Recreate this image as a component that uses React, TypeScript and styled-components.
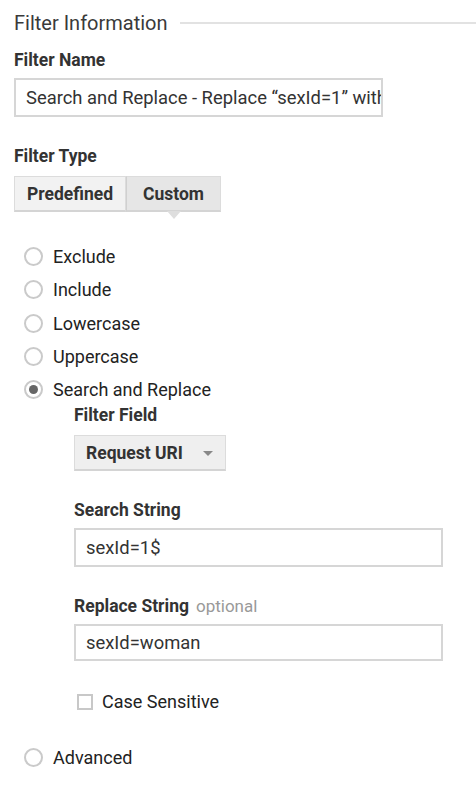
import React from "react";
import styled, { createGlobalStyle } from "styled-components";

const Global = createGlobalStyle`
  html, body { margin: 0; padding: 0; background: #fff; }
  body { font-family: Roboto, "Liberation Sans", Arial, sans-serif; color: #333; }
`;

const Page = styled.div`
  width: 476px;
  padding: 10px 0 20px 14px;
  box-sizing: border-box;
`;

const SectionHeader = styled.div`
  display: flex;
  align-items: center;
  height: 26px;
`;

const SectionTitle = styled.div`
  font-size: 20px;
  color: #3a3a3a;
  white-space: nowrap;
`;

const HeaderRule = styled.div`
  flex: 1;
  margin-left: 12px;
  height: 2px;
  background: #e2e2e2;
`;

const Label = styled.div<{ $mt: number }>`
  margin-top: ${(p) => p.$mt}px;
  font-size: 17.5px;
  font-weight: 700;
  color: #333;
  line-height: 20px;
`;

const Optional = styled.span`
  font-weight: 400;
  color: #999;
  margin-left: 7px;
  font-size: 17px;
`;

const TextBox = styled.div<{ $w: number; $h: number; $mt: number }>`
  margin-top: ${(p) => p.$mt}px;
  width: ${(p) => p.$w}px;
  height: ${(p) => p.$h}px;
  box-sizing: border-box;
  border: 2px solid #d6d6d6;
  padding: 0 10px;
  display: flex;
  align-items: center;
  font-size: 18.4px;
  color: #333;
  overflow: hidden;
  white-space: nowrap;
`;

const ButtonGroup = styled.div`
  display: flex;
  margin-top: 10px;
  height: 36px;
`;

const ToggleButton = styled.div<{ $active?: boolean; $w: number }>`
  position: relative;
  width: ${(p) => p.$w}px;
  box-sizing: border-box;
  display: flex;
  align-items: center;
  justify-content: center;
  font-size: 17.5px;
  font-weight: 700;
  color: #333;
  background: ${(p) => (p.$active ? "#e6e6e6" : "#f2f2f2")};
  border: 1px solid #dcdcdc;
  border-bottom: 2px solid #d4d4d4;
  & + & { border-left: 1px solid #d0d0d0; }
`;

const Pointer = styled.div`
  position: absolute;
  left: 50%;
  bottom: -9px;
  margin-left: -7px;
  width: 0;
  height: 0;
  border-left: 7px solid transparent;
  border-right: 7px solid transparent;
  border-top: 8px solid #dedede;
`;

const RadioList = styled.div`
  margin-top: 28px;
  display: flex;
  flex-direction: column;
`;

const RadioRow = styled.div<{ $mt?: number }>`
  display: flex;
  align-items: center;
  height: 33.3px;
  padding-left: 10px;
  margin-top: ${(p) => p.$mt || 0}px;
`;

const RadioCircle = styled.div<{ $checked?: boolean }>`
  width: 19px;
  height: 19px;
  box-sizing: border-box;
  border: 2px solid #cacaca;
  border-radius: 50%;
  display: flex;
  align-items: center;
  justify-content: center;
  &::after {
    content: "";
    display: ${(p) => (p.$checked ? "block" : "none")};
    width: 9px;
    height: 9px;
    border-radius: 50%;
    background: #666;
  }
`;

const RadioLabel = styled.span`
  margin-left: 10px;
  font-size: 18px;
  color: #222;
`;

const SubForm = styled.div`
  padding-left: 60px;
  display: flex;
  flex-direction: column;
`;

const SelectBox = styled.div`
  margin-top: 10px;
  width: 152px;
  height: 36px;
  box-sizing: border-box;
  background: #efefef;
  border: 1px solid #dcdcdc;
  border-bottom: 2px solid #d4d4d4;
  display: flex;
  align-items: center;
  justify-content: space-between;
  padding: 0 12px 0 11px;
  font-size: 17.5px;
  font-weight: 700;
  color: #333;
`;

const Caret = styled.div`
  width: 0;
  height: 0;
  border-left: 5px solid transparent;
  border-right: 5px solid transparent;
  border-top: 5px solid #888;
  margin-top: 2px;
`;

const CheckRow = styled.div`
  display: flex;
  align-items: center;
  margin-top: 30px;
  padding-left: 3px;
`;

const CheckBox = styled.div`
  width: 16px;
  height: 16px;
  box-sizing: border-box;
  border: 2px solid #c8c8c8;
`;

const CheckLabel = styled.span`
  margin-left: 9px;
  font-size: 18px;
  color: #222;
`;

const radios = ["Exclude", "Include", "Lowercase", "Uppercase"];

export default function App() {
  return (
    <>
      <Global />
      <Page>
        <SectionHeader>
          <SectionTitle>Filter Information</SectionTitle>
          <HeaderRule />
        </SectionHeader>
        <Label $mt={14}>Filter Name</Label>
        <TextBox $w={369} $h={39} $mt={8}>
          Search and Replace - Replace “sexId=1” with “sexId=woman”
        </TextBox>
        <Label $mt={29}>Filter Type</Label>
        <ButtonGroup>
          <ToggleButton $w={112}>Predefined</ToggleButton>
          <ToggleButton $w={95} $active>
            Custom
            <Pointer />
          </ToggleButton>
        </ButtonGroup>
        <RadioList>
          {radios.map((r) => (
            <RadioRow key={r}>
              <RadioCircle />
              <RadioLabel>{r}</RadioLabel>
            </RadioRow>
          ))}
          <RadioRow>
            <RadioCircle $checked />
            <RadioLabel>Search and Replace</RadioLabel>
          </RadioRow>
          <SubForm>
            <Label $mt={-1}>Filter Field</Label>
            <SelectBox>
              Request URI
              <Caret />
            </SelectBox>
            <Label $mt={29}>Search String</Label>
            <TextBox $w={369} $h={39} $mt={8}>sexId=1$</TextBox>
            <Label $mt={29}>
              Replace String<Optional>optional</Optional>
            </Label>
            <TextBox $w={369} $h={37} $mt={8}>sexId=woman</TextBox>
            <CheckRow>
              <CheckBox />
              <CheckLabel>Case Sensitive</CheckLabel>
            </CheckRow>
          </SubForm>
          <RadioRow $mt={28}>
            <RadioCircle />
            <RadioLabel>Advanced</RadioLabel>
          </RadioRow>
        </RadioList>
      </Page>
    </>
  );
}
